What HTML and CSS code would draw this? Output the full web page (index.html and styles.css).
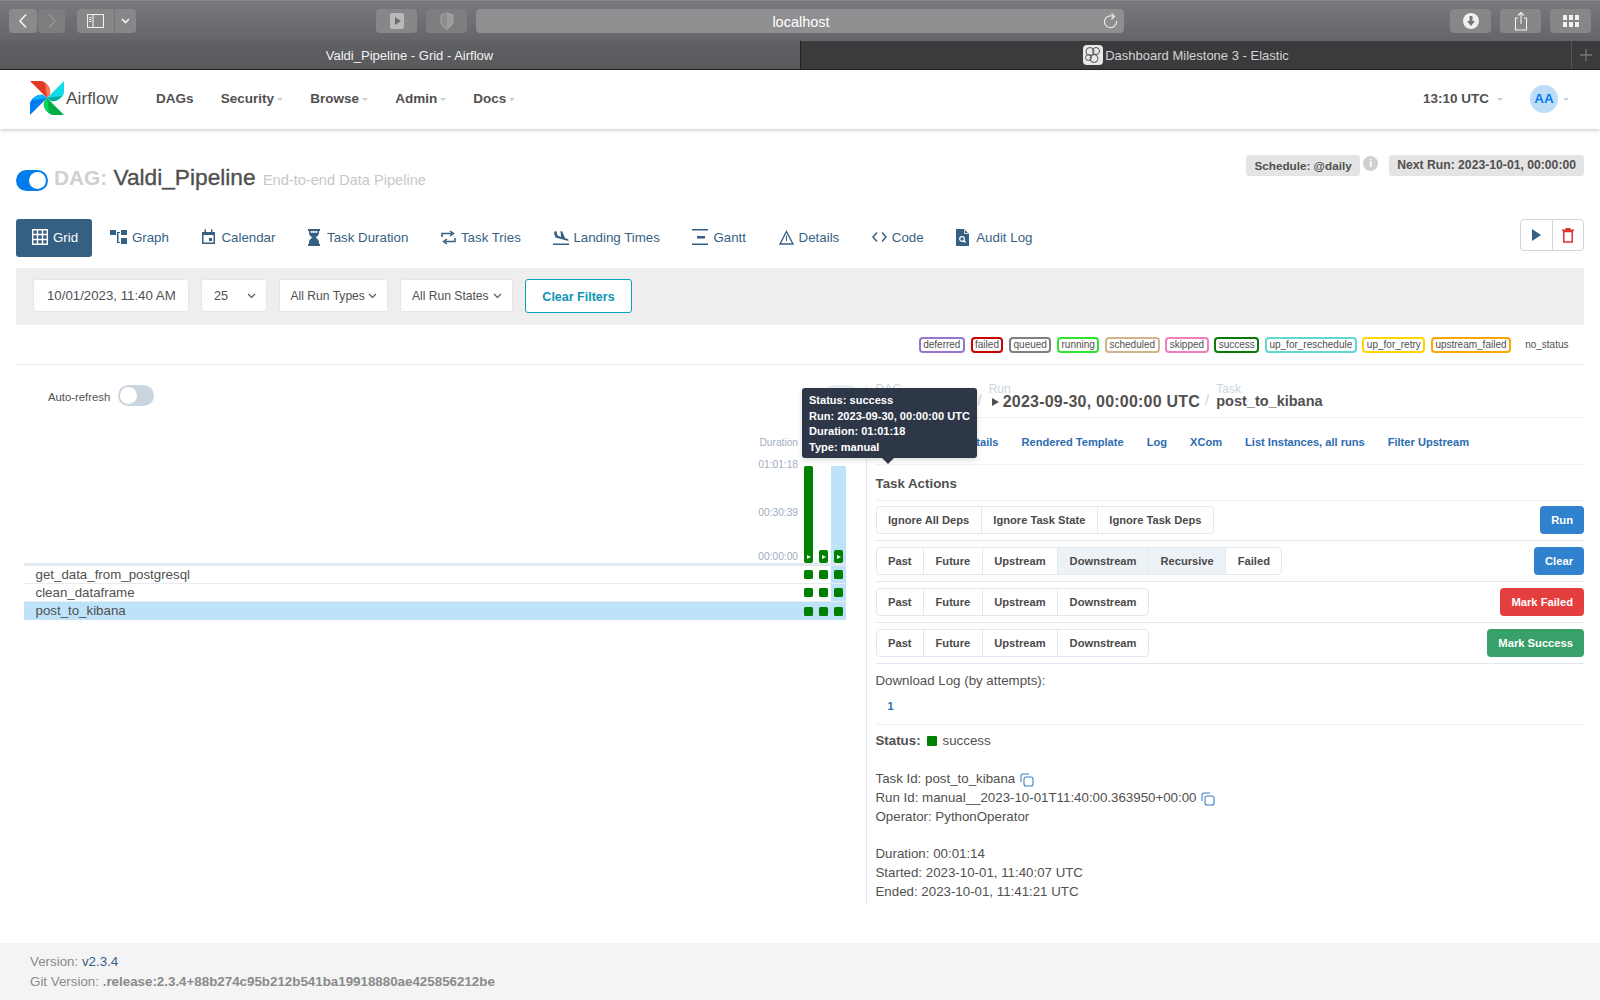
FILE: index.html
```html
<!DOCTYPE html>
<html lang="en">
<head>
<meta charset="utf-8">
<title>Valdi_Pipeline - Grid - Airflow</title>
<link rel="stylesheet" href="styles.css">
</head>
<body>
<header class="chrome">
  <div class="toolbar">
    <div class="tb-btn tb-back"><svg width="10" height="16" viewBox="0 0 10 16"><path d="M8 1.500 2 8l6 6.500" class="ic-w"/></svg></div>
    <div class="tb-btn tb-fwd"><svg width="10" height="16" viewBox="0 0 10 16"><path d="M2 1.500 8 8l-6 6.500" class="ic-dim"/></svg></div>
    <div class="tb-btn tb-side">
      <span class="tb-side-a"><svg width="17" height="14" viewBox="0 0 17 14"><rect x=".5" y=".5" width="16" height="13" class="ic-thin"/><path d="M6 .5v13M2 3.500h2.500M2 5.500h2.500M2 7.500h2.500" class="ic-thin"/></svg></span>
      <span class="tb-side-b"><svg width="9" height="6" viewBox="0 0 9 6"><path d="M1 1l3.500 3.500L8 1" class="ic-w"/></svg></span>
    </div>
    <div class="tb-btn tb-play"><svg width="16" height="18" viewBox="0 0 16 18"><rect x="1" y="1" width="14" height="16" rx="2" fill="#b9b9bb"/><path d="M6 5l6 4-6 4z" fill="#6d6d70"/></svg></div>
    <div class="tb-btn tb-shield"><svg width="14" height="18" viewBox="0 0 14 18"><path d="M7 1l6 2v6c0 4-3 6.500-6 8-3-1.500-6-4-6-8V3z" fill="#8d8d8f" stroke="#a9a9ab"/><path d="M7 1l6 2v6c0 4-3 6.500-6 8z" fill="#9d9d9f"/></svg></div>
    <div class="tb-url"><span class="tb-url-text">localhost</span><svg class="tb-reload" width="14" height="18" viewBox="0 0 14 18"><path d="M9.500 4.500A6 6 0 1 0 12.500 9" class="ic-thin"/><path d="M7.500 1.500l3 3-3 2.500" class="ic-thin"/></svg></div>
    <div class="tb-btn tb-down"><svg width="18" height="18" viewBox="0 0 18 18"><circle cx="9" cy="9" r="8" fill="#f0f0f0"/><path d="M7.500 4h3v5h2.500L9 14 5 9h2.500z" fill="#77777a"/></svg></div>
    <div class="tb-btn tb-share"><svg width="14" height="20" viewBox="0 0 14 20"><path d="M4 7H1.500v12h11V7H10M7 13V1.500M4 4.500l3-3 3 3" class="ic-thin"/></svg></div>
    <div class="tb-btn tb-apps"><svg width="16" height="12" viewBox="0 0 16 12"><path d="M0 0h4v5H0zM6 0h4v5H6zM12 0h4v5h-4zM0 7h4v5H0zM6 7h4v5H6zM12 7h4v5h-4z" fill="#f0f0f0"/></svg></div>
  </div>
  <div class="tabbar">
    <div class="tab tab-on">Valdi_Pipeline - Grid - Airflow</div>
    <div class="tab tab-off"><svg class="fav" width="20" height="20" viewBox="0 0 20 20"><rect width="20" height="20" rx="4" fill="#e8e8e8"/><g fill="none" stroke="#555"><circle cx="7" cy="6.500" r="4"/><circle cx="13" cy="6" r="3.500"/><circle cx="5.500" cy="12.500" r="3"/><circle cx="11" cy="13.500" r="4"/></g></svg>Dashboard Milestone 3 - Elastic</div>
    <div class="tab tab-plus"><svg width="12" height="12" viewBox="0 0 12 12"><path d="M6 0v12M0 6h12" stroke="#77777a" stroke-width="1.300"/></svg></div>
  </div>
</header>

<nav class="navbar">
  <div class="brand">
    <svg width="34" height="34" viewBox="0 0 34 34">
      <g><path d="M0 0H12C17 2 21 7 20 13L17 17Z" fill="#e43921"/><path d="M17 17L20 13C21 9 19 5 15 2Z" fill="#ff7557"/></g>
      <g transform="rotate(90 17 17)"><path d="M0 0H12C17 2 21 7 20 13L17 17Z" fill="#11dbe8"/><path d="M17 17L20 13C21 9 19 5 15 2Z" fill="#00ad9f"/></g>
      <g transform="rotate(180 17 17)"><path d="M0 0H12C17 2 21 7 20 13L17 17Z" fill="#00ad46"/><path d="M17 17L20 13C21 9 19 5 15 2Z" fill="#04d659"/></g>
      <g transform="rotate(270 17 17)"><path d="M0 0H12C17 2 21 7 20 13L17 17Z" fill="#017cee"/><path d="M17 17L20 13C21 9 19 5 15 2Z" fill="#0cb6ff"/></g>
    </svg>
    <span class="brand-name">Airflow</span>
  </div>
  <a class="menu">DAGs</a>
  <a class="menu">Security<i class="caret"></i></a>
  <a class="menu">Browse<i class="caret"></i></a>
  <a class="menu">Admin<i class="caret"></i></a>
  <a class="menu">Docs<i class="caret"></i></a>
  <span class="clock">13:10 UTC<i class="caret"></i></span>
  <span class="avatar">AA</span><i class="caret"></i>
</nav>

<div class="page">
  <div class="title-row">
    <span class="switch switch-on"></span>
    <h1 class="title"><span class="title-dag">DAG:</span> <span class="title-name">Valdi_Pipeline</span> <small class="title-desc">End-to-end Data Pipeline</small></h1>
    <div class="sched">
      <span class="badge">Schedule: @daily</span>
      <span class="info">i</span>
      <span class="badge badge-next">Next Run: 2023-10-01, 00:00:00</span>
    </div>
  </div>

  <div class="view-row">
    <a class="view view-on"><svg width="16" height="16" viewBox="0 0 16 16"><path d="M.7.7h14.600v14.600H.7zM5.500.7v14.600M10.500.7v14.600M.7 5.500h14.600M.7 10.500h14.600" fill="none" stroke="#fff" stroke-width="1.400"/></svg>Grid</a>
    <a class="view"><svg width="17" height="16" viewBox="0 0 17 16"><path d="M0 1h6v5H0zM11 1h6v5h-6zM11 9h6v6h-6zM7 3h3v1H8.500v9H10v1H7z" fill="#365f84"/></svg>Graph</a>
    <a class="view"><svg width="15" height="16" viewBox="0 0 15 16"><path d="M1 3h13v12H1zM3.500 .5h1.500V4H3.500zM10 .5h1.500V4H10z" fill="#365f84"/><path d="M2.500 6h10v7.500h-10z" fill="#fff"/><path d="M8 9h3v3H8z" fill="#365f84"/></svg>Calendar</a>
    <a class="view view-wide"><svg width="12" height="17" viewBox="0 0 12 17"><path d="M0 0h12v2h-1v2c0 2-2 3.500-3.500 4.500C9 9.500 11 11 11 13v2h1v2H0v-2h1v-2c0-2 2-3.500 3.500-4.500C3 7.500 1 6 1 4V2H0z" fill="#365f84"/><path d="M2.500 2.200h7v1.500H2.500z" fill="#fff"/></svg>Task Duration</a>
    <a class="view"><svg width="15" height="15" viewBox="0 0 15 15"><path d="M1 7V3.500h10M9 1l3.500 2.500L9 6M14 8v3.500H4M6 9l-3.500 2.500L6 14" fill="none" stroke="#365f84" stroke-width="1.500"/></svg>Task Tries</a>
    <a class="view view-tight"><svg width="16" height="15" viewBox="0 0 16 15"><path d="M0 13.500h16v1.500H0zM2 1l1.500.5 1 4L8 7l-.5-6 1.800.5L12 8l3 1.200c1 .6.5 1.800-.5 1.500L2.500 7.500 1 3z" fill="#365f84"/></svg>Landing Times</a>
    <a class="view"><svg width="16" height="16" viewBox="0 0 16 16"><path d="M0 0h16v1.500H0zM0 14.500h16V16H0zM5 7h8v2.500H5z" fill="#365f84"/></svg>Gantt</a>
    <a class="view"><svg width="15" height="15" viewBox="0 0 15 15"><path d="M7.500 1.500L14 14H1z" fill="none" stroke="#365f84" stroke-width="1.400"/><path d="M7 5.500h1V11H7z" fill="#365f84"/></svg>Details</a>
    <a class="view"><svg width="15" height="12" viewBox="0 0 15 12"><path d="M5 1.500L1 6l4 4.500M10 1.500L14 6l-4 4.500" fill="none" stroke="#365f84" stroke-width="1.500"/></svg>Code</a>
    <a class="view view-wide"><svg width="13" height="17" viewBox="0 0 13 17"><path d="M0 0h8l5 5v12H0z" fill="#365f84"/><path d="M8.500 1v3.500H12" fill="none" stroke="#fff" stroke-width=".8"/><circle cx="6" cy="10" r="2.300" fill="none" stroke="#fff" stroke-width="1.200"/><path d="M7.500 11.500l2 2" stroke="#fff" stroke-width="1.400"/></svg>Audit Log</a>
    <div class="actions">
      <span class="act"><svg width="9" height="12" viewBox="0 0 9 12"><path d="M0 0l9 6-9 6z" fill="#365f84"/></svg></span>
      <span class="act"><svg width="12" height="15" viewBox="0 0 12 15"><path d="M0 1.500h12v1.500H0zM3.500 0h5v1.500h-5z" fill="#d9372c"/><path d="M1.800 3.500h8.400V14H1.800z" fill="none" stroke="#d9372c" stroke-width="1.500"/></svg></span>
    </div>
  </div>

  <div class="filters">
    <div class="field field-date">10/01/2023, 11:40 AM</div>
    <div class="field field-num">25<svg width="9" height="6" viewBox="0 0 9 6"><path d="M1 1l3.500 3.500L8 1" class="ic-sel"/></svg></div>
    <div class="field field-type">All Run Types<svg width="9" height="6" viewBox="0 0 9 6"><path d="M1 1l3.500 3.500L8 1" class="ic-sel"/></svg></div>
    <div class="field field-state">All Run States<svg width="9" height="6" viewBox="0 0 9 6"><path d="M1 1l3.500 3.500L8 1" class="ic-sel"/></svg></div>
    <div class="clear-filters">Clear Filters</div>
  </div>

  <div class="legend">
    <span class="st st-deferred">deferred</span>
    <span class="st st-failed">failed</span>
    <span class="st st-queued">queued</span>
    <span class="st st-running">running</span>
    <span class="st st-scheduled">scheduled</span>
    <span class="st st-skipped">skipped</span>
    <span class="st st-success">success</span>
    <span class="st st-resched">up_for_reschedule</span>
    <span class="st st-retry">up_for_retry</span>
    <span class="st st-upfailed">upstream_failed</span>
    <span class="st st-none">no_status</span>
  </div>

  <main class="split">
    <section class="grid-panel">
      <div class="refresh">
        <span class="refresh-label">Auto-refresh</span>
        <span class="switch switch-off"></span>
        <span class="mini-btn"></span>
      </div>
      <div class="chart">
        <div class="axis">
          <span class="axis-title">Duration</span>
          <span class="axis-a">01:01:18</span>
          <span class="axis-b">00:30:39</span>
          <span class="axis-c">00:00:00</span>
        </div>
        <div class="run"><span class="bar bar-full"><i class="tri"></i></span></div>
        <div class="run"><span class="bar"><i class="tri"></i></span></div>
        <div class="run run-sel"><span class="bar"><i class="tri"></i></span></div>
      </div>
      <div class="row"><span class="row-name">get_data_from_postgresql</span><span class="cell"><i></i></span><span class="cell"><i></i></span><span class="cell cell-sel"><i></i></span></div>
      <div class="row"><span class="row-name">clean_dataframe</span><span class="cell"><i></i></span><span class="cell"><i></i></span><span class="cell cell-sel"><i></i></span></div>
      <div class="row row-sel"><span class="row-name">post_to_kibana</span><span class="cell"><i></i></span><span class="cell"><i></i></span><span class="cell"><i></i></span></div>
    </section>

    <section class="detail">
      <div class="crumbs">
        <div class="crumb crumb-dag"><span class="crumb-label">DAG</span></div>
        <span class="slash">/</span>
        <div class="crumb"><span class="crumb-label">Run</span><span class="crumb-val crumb-date"><i class="crumb-tri"></i>2023-09-30, 00:00:00 UTC</span></div>
        <span class="slash">/</span>
        <div class="crumb"><span class="crumb-label">Task</span><span class="crumb-val crumb-task">post_to_kibana</span></div>
      </div>
      <div class="links">
        <a>Task Instance Details</a><a>Rendered Template</a><a>Log</a><a>XCom</a><a>List Instances, all runs</a><a>Filter Upstream</a>
      </div>
      <h2 class="actions-title">Task Actions</h2>
      <div class="act-row">
        <div class="bgroup"><span class="b">Ignore All Deps</span><span class="b">Ignore Task State</span><span class="b">Ignore Task Deps</span></div>
        <span class="go go-blue">Run</span>
      </div>
      <div class="act-row">
        <div class="bgroup"><span class="b">Past</span><span class="b">Future</span><span class="b">Upstream</span><span class="b b-on">Downstream</span><span class="b b-on">Recursive</span><span class="b">Failed</span></div>
        <span class="go go-blue">Clear</span>
      </div>
      <div class="act-row">
        <div class="bgroup"><span class="b">Past</span><span class="b">Future</span><span class="b">Upstream</span><span class="b">Downstream</span></div>
        <span class="go go-red">Mark Failed</span>
      </div>
      <div class="act-row">
        <div class="bgroup"><span class="b">Past</span><span class="b">Future</span><span class="b">Upstream</span><span class="b">Downstream</span></div>
        <span class="go go-green">Mark Success</span>
      </div>
      <p class="dl-title">Download Log (by attempts):</p>
      <a class="dl-link">1</a>
      <div class="status"><b>Status:</b><i class="status-dot"></i>success</div>
      <div class="meta">
        <p>Task Id: post_to_kibana<svg class="copy" width="14" height="14" viewBox="0 0 14 14"><path d="M1 9V3a2 2 0 0 1 2-2h6" class="ic-copy"/><rect x="4" y="4" width="9" height="9" rx="2" class="ic-copy"/></svg></p>
        <p>Run Id: manual__2023-10-01T11:40:00.363950+00:00<svg class="copy" width="14" height="14" viewBox="0 0 14 14"><path d="M1 9V3a2 2 0 0 1 2-2h6" class="ic-copy"/><rect x="4" y="4" width="9" height="9" rx="2" class="ic-copy"/></svg></p>
        <p>Operator: PythonOperator</p>
      </div>
      <div class="meta">
        <p>Duration: 00:01:14</p>
        <p>Started: 2023-10-01, 11:40:07 UTC</p>
        <p>Ended: 2023-10-01, 11:41:21 UTC</p>
      </div>
    </section>

    <div class="tooltip">
      <div>Status: success</div>
      <div>Run: 2023-09-30, 00:00:00 UTC</div>
      <div>Duration: 01:01:18</div>
      <div>Type: manual</div>
    </div>
  </main>
</div>

<footer class="footer">
  <div>Version: <a class="foot-link">v2.3.4</a></div>
  <div>Git Version: <strong>.release:2.3.4+88b274c95b212b541ba19918880ae425856212be</strong></div>
</footer>
</body>
</html>
```
FILE: styles.css
```css
* { box-sizing: border-box; }
html, body { margin: 0; padding: 0; }
body { width: 1600px; height: 1000px; overflow: hidden; background: #fff; font-family: "Liberation Sans", Arial, sans-serif; color: #51504f; font-size: 13.300px; }
p, h1, h2 { margin: 0; }
svg { display: block; flex: none; }
.ic-w { fill: none; stroke: #f2f2f2; stroke-width: 1.600; }
.ic-dim { fill: none; stroke: #959597; stroke-width: 1.600; }
.ic-thin { fill: none; stroke: #efefef; stroke-width: 1.100; }
.ic-sel { fill: none; stroke: #555; stroke-width: 1.100; }
.ic-copy { fill: none; stroke: #3d7fc4; stroke-width: 1.100; }

/* browser chrome */
.toolbar { height: 41px; display: flex; align-items: center; padding: 0 9px; background: linear-gradient(#78797c, #646568); border-top: 1px solid #8a8a8c; }
.tb-btn { height: 24px; background: #878789; border-radius: 4px; display: flex; align-items: center; justify-content: center; }
.tb-back { width: 28px; margin-right: 1px; background: #8a8a8c; }
.tb-fwd { width: 27px; background: #7d7d80; }
.tb-side { width: 59px; margin-left: 12px; overflow: hidden; }
.tb-side-a { width: 38px; height: 24px; display: flex; align-items: center; justify-content: center; border-right: 1px solid #737376; }
.tb-side-b { width: 21px; height: 24px; display: flex; align-items: center; justify-content: center; }
.tb-play { width: 41px; margin-left: 240px; }
.tb-shield { width: 41px; margin-left: 9px; background: #7e7e81; }
.tb-url { width: 648px; height: 24px; margin-left: 9px; padding: 1px 0 0 2px; background: #8f8f91; border-radius: 4px; position: relative; display: flex; align-items: center; justify-content: center; color: #fff; font-size: 14.500px; }
.tb-reload { position: absolute; right: 6px; top: 3px; }
.tb-down { width: 41px; margin-left: 326px; }
.tb-share { width: 41px; margin-left: 9px; }
.tb-apps { width: 41px; margin-left: 9px; }
.tabbar { height: 29px; display: flex; border-bottom: 1px solid #1d1d1f; }
.tab { display: flex; align-items: center; justify-content: center; font-size: 13px; }
.tab-on { width: 800px; padding-left: 19px; background: linear-gradient(#5f6063, #5a5a5d); color: #f2f2f2; }
.tab-off { width: 772px; background: #3b3b3e; color: #d4d4d4; border-left: 1px solid #222; border-right: 1px solid #555; }
.tab-plus { flex: 1; background: #3b3b3e; }
.fav { margin-right: 2px; }

/* navbar */
.navbar { height: 59px; padding-bottom: 2px; display: flex; align-items: center; background: #fff; box-shadow: 0 1px 4px rgba(80,90,90,.35); position: relative; padding-left: 30px; font-size: 13.500px; font-weight: bold; color: #51504f; }
.brand { display: flex; align-items: center; width: 126px; margin-top: -2px; }
.brand-name { font-size: 17.400px; font-weight: normal; color: #51504f; margin-left: 2px; margin-top: 2px; }
.menu { margin-right: 27.200px; display: flex; align-items: center; }
.caret { display: inline-block; width: 0; height: 0; margin-left: 3px; margin-top: 2px; border: 3px solid transparent; border-top-color: #ccc; border-bottom: 0; }
.clock { margin-left: auto; display: flex; align-items: center; margin-right: -2px; }
.clock .caret { margin-left: 8px; }
.avatar { width: 28px; height: 28px; border-radius: 50%; background: #bcdcf8; color: #017cee; display: flex; align-items: center; justify-content: center; margin-left: 29px; font-size: 13.500px; }
.navbar > .caret { margin-left: 5px; margin-right: 31px; }

/* page */
.page { padding: 0 16px; }
.title-row { height: 90px; display: flex; align-items: flex-start; }
.switch { display: block; width: 32px; height: 21px; border-radius: 11px; position: relative; flex: none; }
.switch::after { content: ""; position: absolute; top: 2px; width: 17px; height: 17px; border-radius: 50%; background: #fff; }
.switch-on { background: #017cee; margin-top: 41px; }
.switch-on::after { right: 2px; }
.switch-off { width: 36px; background: #cbd5e0; }
.switch-off::after { left: 2px; }
.title { margin: 31px 0 0 6px; font-size: 22.700px; line-height: 34px; font-weight: normal; white-space: nowrap; }
.title-dag { color: #cfcfcf; font-weight: bold; font-size: 20.800px; }
.title-name { color: #51504f; -webkit-text-stroke: .35px #51504f; }
.title-desc { color: #c8c8c8; font-size: 14.600px; margin-left: 1px; }
.sched { margin-left: auto; display: flex; margin-top: 26px; font-weight: bold; align-items: flex-start; }
.badge { height: 21px; line-height: 21px; background: #e4e4e4; border-radius: 3px; padding: 0 8.500px; color: #51504f; font-size: 11.700px; }
.badge-next { font-size: 12.200px; padding: 0 8px; }
.info { width: 15px; height: 15px; margin: 1px 11px 0 3px; border-radius: 50%; background: #cfcfcf; color: #fff; font-size: 11px; line-height: 15px; text-align: center; }
.view-row { display: flex; align-items: flex-start; height: 49px; }
.view { height: 38px; display: flex; align-items: center; gap: 5px; padding: 0 16.300px 2px; color: #365f84; border-radius: 3px; white-space: nowrap; }
.view-wide { gap: 7px; }
.view-tight { gap: 4px; }
.view-on { background: #365f84; color: #fff; padding: 0 14px 2px 16px; margin-right: 1.500px; }
.actions { margin-left: auto; width: 64px; height: 32px; display: flex; border: 1px solid #d5d5d5; border-radius: 4px; }
.act { flex: 1; display: flex; align-items: center; justify-content: center; }
.act + .act { border-left: 1px solid #d5d5d5; }
.filters { height: 57px; background: #eee; display: flex; align-items: center; padding: 0 0 2px 17px; font-size: 12.100px; color: #51504f; }
.field { height: 33px; background: #fff; border: 1px solid #e6e6e6; border-radius: 3px; display: flex; align-items: center; white-space: nowrap; }
.field svg { margin-left: auto; }
.field-date { width: 156px; padding-left: 13px; margin-right: 12px; font-size: 13.250px; }
.field-num { width: 66px; padding: 0 10px 0 12px; margin-right: 12px; font-size: 12.600px; }
.field-type { width: 109px; padding: 0 10px 0 10.500px; margin-right: 12px; }
.field-state { width: 113px; padding: 0 10px 0 11px; margin-right: 12px; }
.clear-filters { width: 107px; height: 34px; line-height: 34px; text-align: center; background: #fff; border: 1px solid #00a7c4; border-radius: 3px; color: #0c94b8; font-size: 12.500px; font-weight: bold; }
.legend { height: 40px; display: flex; justify-content: flex-end; align-items: flex-start; padding: 12px 11px 0 0; gap: 5.600px; font-size: 10px; border-bottom: 1px solid #e9edf2; }
.st { height: 16px; line-height: 12px; padding: 0 2.500px; border: 2px solid; border-radius: 4px; white-space: nowrap; color: #51504f; }
.st-deferred { border-color: #9575cd; }
.st-failed { border-color: #c00; }
.st-queued { border-color: #808080; }
.st-running { border-color: #2ee42e; }
.st-scheduled { border-color: #d2b48c; }
.st-skipped { border-color: #f07fc0; }
.st-success { border-color: #0a7a0a; }
.st-resched { border-color: #5fd8cf; }
.st-retry { border-color: #ffd700; }
.st-upfailed { border-color: #ffa500; }
.st-none { border-color: transparent; margin-left: 4px; }
.split { display: flex; position: relative; margin-top: 20px; height: 520px; }
.grid-panel { width: 850px; flex: none; padding: 0 20px 0 8px; }
.refresh { height: 21px; display: flex; align-items: center; margin-left: 24px; font-size: 11.300px; }
.refresh-label { width: 70px; padding-top: 2px; }
.mini-btn { width: 28px; height: 21px; background: #edf2f7; border-radius: 4px; margin-left: auto; margin-right: -9px; }
.chart { height: 160px; display: flex; justify-content: flex-end; border-bottom: 3px solid #e2e8f0; }
.axis { width: 60px; margin-right: 3px; position: relative; font-size: 10.200px; color: #a0aec0; display: flex; flex-direction: column; align-items: flex-end; padding-top: 31px; }
.axis-title { height: 22px; }
.axis-b { margin-top: 36.500px; }
.axis-c { margin-top: 33px; }
.run { width: 15px; display: flex; align-items: flex-end; justify-content: center; }
.run-sel { background: #bee3f8; height: 97px; margin-top: 60px; }
.bar { width: 9px; height: 13px; background: #008000; border-radius: 2px; display: flex; align-items: center; justify-content: center; }
.bar-full { height: 97px; align-items: flex-end; padding-bottom: 4px; }
.tri { width: 0; height: 0; border-left: 4px solid #fff; border-top: 2.500px solid transparent; border-bottom: 2.500px solid transparent; }
.row { height: 18px; display: flex; align-items: center; border-bottom: 1px solid #e8ecf1; font-size: 13.300px; }
.row-name { flex: 1; padding-left: 11.500px; }
.cell { width: 15px; height: 100%; display: flex; align-items: center; justify-content: center; }
.cell i { width: 9px; height: 9px; background: #008000; border-radius: 1.500px; }
.cell-sel { background: #bee3f8; }
.row-sel { background: #bee3f8; border-bottom: 0; }
.row-sel .row-name { padding-bottom: 1px; }

.detail { flex: 1; border-left: 1px solid #e2e8f0; padding-left: 8.500px; position: relative; }
.crumbs { height: 33px; display: flex; align-items: flex-start; border-bottom: 1px solid #edf2f7; }
.crumb { display: flex; flex-direction: column; }
.crumb-dag { width: 97px; }
.crumb-label { font-size: 12px; line-height: 8px; color: #cbd5e0; }
.crumb-val { font-size: 16px; font-weight: bold; line-height: 17px; white-space: nowrap; display: flex; align-items: center; }
.crumb-date { letter-spacing: .22px; }
.crumb-task { font-size: 14.500px; }
.crumb-tri { width: 0; height: 0; border-left: 7px solid #51504f; border-top: 4px solid transparent; border-bottom: 4px solid transparent; margin: 0 4px 0 3px; }
.slash { color: #cbd5e0; font-size: 15px; margin: 6px 7px 0 5px; }
.links { height: 47px; display: flex; align-items: center; gap: 23px; font-size: 11.100px; font-weight: bold; color: #2b6cb0; white-space: nowrap; border-bottom: 1px solid #edf2f7; padding-left: 11px; padding-top: 2px; }
.actions-title { height: 35.500px; line-height: 38px; font-size: 13.300px; font-weight: bold; border-bottom: 1px solid #edf2f7; color: #51504f; }
.act-row { height: 40.800px; display: flex; justify-content: space-between; align-items: center; border-bottom: 1px solid #e2e8f0; }
.bgroup { display: flex; height: 28px; border: 1px solid #e2e8f0; border-radius: 4px; overflow: hidden; font-size: 11.150px; font-weight: bold; }
.b { padding: 0 11.500px; display: flex; align-items: center; white-space: nowrap; color: #4a4a4a; }
.b + .b { border-left: 1px solid #e2e8f0; }
.b-on { background: #edf2f7; }
.go { height: 28px; display: flex; align-items: center; padding: 0 11px; border-radius: 4px; color: #fff; font-size: 11.200px; font-weight: bold; }
.go-blue { background: #3182ce; }
.go-red { background: #e53e3e; }
.go-green { background: #38a169; }
.dl-title { margin-top: 8px; line-height: 18px; }
.dl-link { display: block; margin: 8px 0 0 12px; line-height: 16px; font-size: 11px; font-weight: bold; color: #2b6cb0; }
.status { margin-top: 10px; padding-top: 6px; border-top: 1px solid #edf2f7; line-height: 20px; display: flex; align-items: center; }
.status-dot { width: 10px; height: 10px; background: #008000; border-radius: 1px; margin: 0 6px 0 6px; }
.meta { margin-top: 18px; line-height: 19px; }
.meta p { display: flex; align-items: center; }
.copy { margin-left: 5px; margin-top: 3px; }
.tooltip { position: absolute; left: 786px; top: 3px; width: 175px; height: 70px; background: #2d3748; color: #fff; border-radius: 3px; font-size: 11.050px; line-height: 15.500px; padding: 5px 7px; font-weight: bold; white-space: nowrap; box-shadow: 0 2px 5px rgba(0,0,0,.15); }
.tooltip::after { content: ""; position: absolute; left: 80px; top: 70px; border: 6px solid transparent; border-top-color: #2d3748; border-bottom: 0; }
.footer { position: absolute; left: 0; right: 0; top: 943px; height: 57px; background: #f4f4f4; padding: 9px 30px; font-size: 13.350px; line-height: 20px; color: #8a8a8a; }
.foot-link { color: #365f84; }
.footer strong { color: #8a8a8a; }
```
